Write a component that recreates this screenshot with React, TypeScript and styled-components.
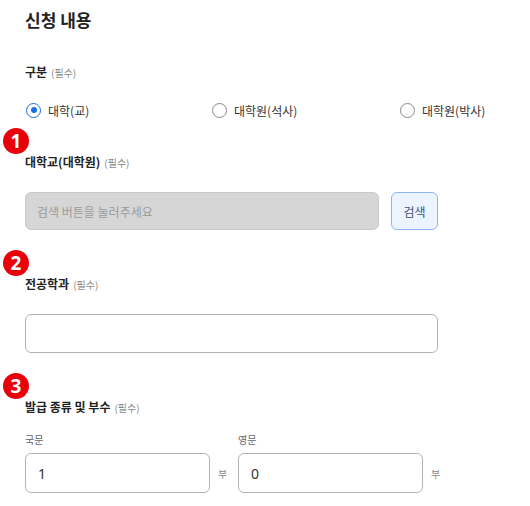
import React from "react";
import styled, { createGlobalStyle } from "styled-components";

const Global = createGlobalStyle`
  html, body { margin: 0; padding: 0; background: #fff; }
  body { font-family: "Noto Sans CJK KR", "Noto Sans", sans-serif; color: #222; }
  * { box-sizing: border-box; }
`;

const Page = styled.div`
  width: 530px;
  padding: 8px 0 0 25px;
`;

const Title = styled.h2`
  margin: 0;
  font-size: 17px;
  font-weight: 700;
  line-height: 24px;
  color: #222;
`;

const Section = styled.section<{ $top: number }>`
  position: relative;
  margin-top: ${(p) => p.$top}px;
  width: 413px;
`;

const Badge = styled.span`
  position: absolute;
  left: -22px;
  top: -25px;
  width: 26px;
  height: 26px;
  border-radius: 50%;
  background: #e8000b;
  color: #fff;
  font-family: "Noto Sans", "Liberation Sans", sans-serif;
  font-weight: 700;
  font-size: 19px;
  line-height: 26px;
  text-align: center;
`;

const Label = styled.div`
  font-size: 12px;
  font-weight: 700;
  line-height: 18px;
  color: #222;
`;

const Req = styled.span`
  margin-left: 4px;
  font-size: 10px;
  font-weight: 400;
  color: #888;
`;

const RadioRow = styled.div`
  display: flex;
  margin-top: 18px;
  height: 20px;
  width: 480px;
`;

const RadioItem = styled.label<{ $w?: number }>`
  display: flex;
  align-items: center;
  gap: 7px;
  width: ${(p) => (p.$w ? `${p.$w}px` : "auto")};
  font-size: 12px;
  color: #333;
  margin-left: 1px;
`;

const RadioCircle = styled.span<{ $on?: boolean }>`
  position: relative;
  width: 15px;
  height: 15px;
  border-radius: 50%;
  border: ${(p) => (p.$on ? "1.5px solid #1a6fe0" : "1.2px solid #8a8a8a")};
  background: #fff;
  flex: none;
  &::after {
    content: "";
    display: ${(p) => (p.$on ? "block" : "none")};
    position: absolute;
    left: 50%;
    top: 50%;
    width: 6px;
    height: 6px;
    margin: -3px 0 0 -3px;
    border-radius: 50%;
    background: #1a6fe0;
  }
`;

const InputRow = styled.div`
  display: flex;
  gap: 12px;
  margin-top: 20px;
`;

const TextBox = styled.div<{ $disabled?: boolean; $h?: number }>`
  flex: 1;
  height: ${(p) => p.$h ?? 38}px;
  border: 1px solid ${(p) => (p.$disabled ? "#c9c9c9" : "#b3b3b3")};
  background: ${(p) => (p.$disabled ? "#d6d6d6" : "#fff")};
  border-radius: 6px;
  display: flex;
  align-items: center;
  padding-left: 11px;
  font-size: 12px;
  color: ${(p) => (p.$disabled ? "#9a9a9a" : "#333")};
`;

const SearchButton = styled.button`
  width: 47px;
  height: 38px;
  border: 1px solid #8fb6f2;
  background: #ecf4ff;
  border-radius: 6px;
  color: #44507a;
  font-family: inherit;
  font-size: 12px;
  padding: 0;
`;

const CountGrid = styled.div`
  display: grid;
  grid-template-columns: repeat(2, 203px);
  column-gap: 10px;
  margin-top: 15px;
`;

const CountCol = styled.div`
  display: flex;
  flex-direction: column;
`;

const SubLabel = styled.div`
  font-size: 10px;
  line-height: 16px;
  color: #666;
`;

const CountRow = styled.div`
  display: flex;
  align-items: center;
  gap: 8px;
  margin-top: 5px;
`;

const Unit = styled.span`
  font-size: 10px;
  color: #888;
  width: 10px;
`;

const NumberBox = styled.div`
  flex: 1;
  height: 40px;
  border: 1px solid #b3b3b3;
  border-radius: 6px;
  display: flex;
  align-items: center;
  padding-left: 12px;
  font-family: "Noto Sans", "Liberation Sans", sans-serif;
  font-size: 14px;
  color: #333;
`;

export default function App() {
  return (
    <>
      <Global />
      <Page>
        <Title>신청 내용</Title>
        <Section $top={31}>
          <Label>
            구분<Req>(필수)</Req>
          </Label>
          <RadioRow>
            <RadioItem $w={185}>
              <RadioCircle $on />
              대학(교)
            </RadioItem>
            <RadioItem $w={187}>
              <RadioCircle />
              대학원(석사)
            </RadioItem>
            <RadioItem>
              <RadioCircle />
              대학원(박사)
            </RadioItem>
          </RadioRow>
        </Section>
        <Section $top={33}>
          <Badge>1</Badge>
          <Label>
            대학교(대학원)<Req>(필수)</Req>
          </Label>
          <InputRow>
            <TextBox $disabled>검색 버튼을 눌러주세요</TextBox>
            <SearchButton>검색</SearchButton>
          </InputRow>
        </Section>
        <Section $top={45}>
          <Badge>2</Badge>
          <Label>
            전공학과<Req>(필수)</Req>
          </Label>
          <InputRow>
            <TextBox $h={39} />
          </InputRow>
        </Section>
        <Section $top={45}>
          <Badge>3</Badge>
          <Label>
            발급 종류 및 부수<Req>(필수)</Req>
          </Label>
          <CountGrid>
            <CountCol>
              <SubLabel>국문</SubLabel>
              <CountRow>
                <NumberBox>1</NumberBox>
                <Unit>부</Unit>
              </CountRow>
            </CountCol>
            <CountCol>
              <SubLabel>영문</SubLabel>
              <CountRow>
                <NumberBox>0</NumberBox>
                <Unit>부</Unit>
              </CountRow>
            </CountCol>
          </CountGrid>
        </Section>
      </Page>
    </>
  );
}
